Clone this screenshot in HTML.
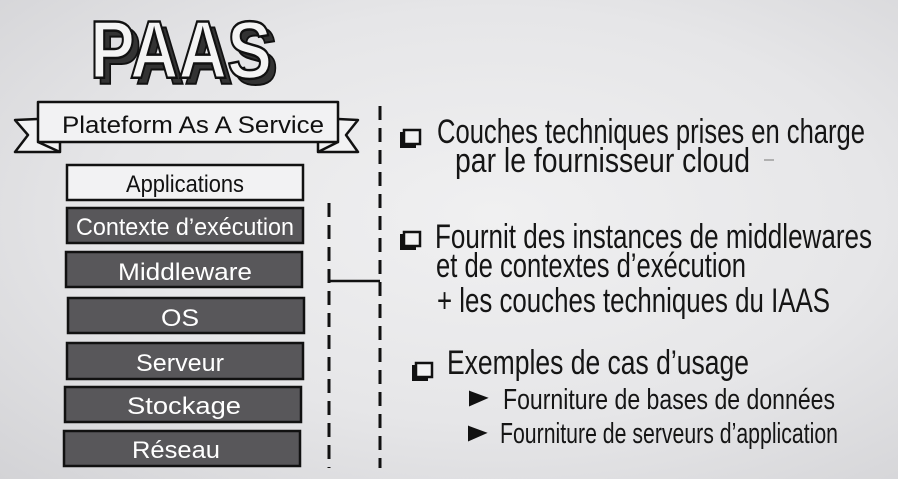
<!DOCTYPE html>
<html><head><meta charset="utf-8"><style>
html,body{margin:0;padding:0;width:898px;height:479px;overflow:hidden}
body{background:radial-gradient(ellipse at 55% 45%,#f0f0f1 0%,#e6e6e8 55%,#d3d3d6 100%)}
svg{display:block}
text{font-family:"Liberation Sans",sans-serif}
</style></head><body>
<svg width="898" height="479" viewBox="0 0 898 479" xmlns="http://www.w3.org/2000/svg">
<g font-family="Liberation Sans" font-weight="bold" font-size="82">
<text x="96" y="84" textLength="182" lengthAdjust="spacingAndGlyphs" fill="#333" stroke="#111" stroke-width="2">PAAS</text>
<text x="90" y="78" textLength="182" lengthAdjust="spacingAndGlyphs" fill="#f4f4f4" stroke="#111" stroke-width="2.5">PAAS</text>
</g>
<g stroke="#111" stroke-width="2.5" fill="#f2f2f3" stroke-linejoin="round">
<polygon points="60,118 15,120 28,135 15,152 60,152"/>
<polygon points="318,118 358,120 346,135 358,152 318,152"/>
<rect x="38" y="102" width="300" height="40"/>
<polyline points="38,142 60,152" fill="none"/>
<polyline points="338,142 318,152" fill="none"/>
</g>
<text x="62" y="133" font-size="24" fill="#111" textLength="262" lengthAdjust="spacingAndGlyphs">Plateform As A Service</text>
<rect x="67" y="165" width="236" height="35" fill="#f2f2f3" stroke="#111" stroke-width="2.5"/>
<text x="185" y="192" font-size="24" fill="#111" text-anchor="middle" textLength="118" lengthAdjust="spacingAndGlyphs">Applications</text>
<g fill="#58575a" stroke="#111" stroke-width="2.5">
<rect x="67" y="208" width="236" height="35"/>
<rect x="66" y="252" width="236" height="35"/>
<rect x="68" y="298" width="236" height="35"/>
<rect x="67" y="343" width="236" height="36"/>
<rect x="65" y="387" width="236" height="35"/>
<rect x="64" y="431" width="236" height="35"/>
</g>
<g fill="#fff" font-size="24" text-anchor="middle">
<text x="185" y="235" textLength="218" lengthAdjust="spacingAndGlyphs">Contexte d’exécution</text>
<text x="185" y="280" textLength="134" lengthAdjust="spacingAndGlyphs">Middleware</text>
<text x="180" y="326" textLength="38" lengthAdjust="spacingAndGlyphs">OS</text>
<text x="180" y="371" textLength="88" lengthAdjust="spacingAndGlyphs">Serveur</text>
<text x="184" y="414" textLength="114" lengthAdjust="spacingAndGlyphs">Stockage</text>
<text x="176" y="458" textLength="88" lengthAdjust="spacingAndGlyphs">Réseau</text>
</g>
<g stroke="#111" stroke-width="3" fill="none">
<line x1="329" y1="203" x2="329" y2="468" stroke-dasharray="14,8"/>
<line x1="380" y1="106" x2="380" y2="468" stroke-dasharray="14,8"/>
<line x1="329" y1="281" x2="380" y2="281" stroke-width="2.5"/>
</g>
<g stroke="#111" stroke-width="2.5" fill="#f2f2f3">
<rect x="404" y="130" width="16" height="14"/><path d="M402 132 v14 h14" fill="none" stroke-width="4"/>
<rect x="404" y="232" width="16" height="14"/><path d="M402 234 v14 h14" fill="none" stroke-width="4"/>
<rect x="416" y="363" width="16" height="14"/><path d="M414 365 v14 h14" fill="none" stroke-width="4"/>
</g>
<g fill="#111" stroke="#111" stroke-width="2">
<polygon points="470,392 486,398 470,405"/>
<polygon points="469,427 485,433 469,440"/>
</g>
<g fill="#151515" font-size="34">
<text x="437" y="143" textLength="428" lengthAdjust="spacingAndGlyphs">Couches techniques prises en charge</text>
<text x="455" y="172" textLength="295" lengthAdjust="spacingAndGlyphs">par le fournisseur cloud</text>
<text x="435" y="248" textLength="437" lengthAdjust="spacingAndGlyphs">Fournit des instances de middlewares</text>
<text x="436" y="277" textLength="310" lengthAdjust="spacingAndGlyphs">et de contextes d’exécution</text>
<text x="437" y="312" textLength="393" lengthAdjust="spacingAndGlyphs">+ les couches techniques du IAAS</text>
<text x="447" y="374" textLength="302" lengthAdjust="spacingAndGlyphs">Exemples de cas d’usage</text>
<text x="503" y="409" font-size="29" textLength="332" lengthAdjust="spacingAndGlyphs">Fourniture de bases de données</text>
<text x="500" y="443" font-size="29" textLength="338" lengthAdjust="spacingAndGlyphs">Fourniture de serveurs d’application</text>
</g>
<line x1="764" y1="160" x2="774" y2="160" stroke="#777" stroke-width="1"/>
</svg>
</body></html>
